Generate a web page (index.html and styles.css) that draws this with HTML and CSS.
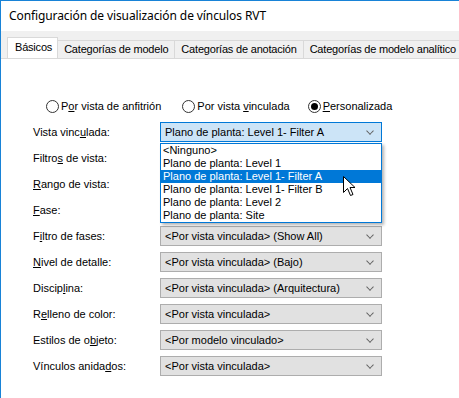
FILE: index.html
```html
<!DOCTYPE html>
<html lang="es">
<head>
   <meta charset="UTF-8">
   <title>Configuración de visualización de vínculos RVT</title>
   <link rel="stylesheet" href="styles.css">
</head>
<body>
   <div class="window">
       <div class="titlebar">Configuración de visualización de vínculos RVT</div>

       <div class="tabbar">
           <div class="tab active">Básicos</div>
           <div class="tab">Categorías de modelo</div>
           <div class="tab">Categorías de anotación</div>
           <div class="tab">Categorías de modelo analítico</div>
       </div>

       <div class="panel">
           <div class="radios">
               <label class="radio"><span class="circle"></span><span>P<u>o</u>r vista de anfitrión</span></label>
               <label class="radio"><span class="circle"></span><span>Por vista <u>v</u>inculada</span></label>
               <label class="radio"><span class="circle checked"></span><span><u>P</u>ersonalizada</span></label>
           </div>

           <div class="form">
               <div class="form-label">Vista vinc<u>u</u>lada:</div>
               <div class="combo-wrap">
                   <div class="combo open">Plano de planta: Level 1- Filter A<span class="chevron"></span></div>
                   <div class="dropdown">
                       <div class="option">&lt;Ninguno&gt;</div>
                       <div class="option">Plano de planta: Level 1</div>
                       <div class="option selected">Plano de planta: Level 1- Filter A</div>
                       <div class="option">Plano de planta: Level 1- Filter B</div>
                       <div class="option">Plano de planta: Level 2</div>
                       <div class="option">Plano de planta: Site</div>
                       <svg class="cursor" width="14" height="22" viewBox="0 0 14 22">
                           <path d="M1.5 1.5 L1.5 17.5 L5.5 13.5 L8.5 20.5 L11 19.5 L8 12.5 L13 12.5 Z" fill="#fff" stroke="#000" stroke-width="1"/>
                       </svg>
                   </div>
               </div>

               <!-- estos tres quedan tapados por la lista abierta -->
               <div class="form-label">Filtro<u>s</u> de vista:</div>
               <div class="combo"></div>

               <div class="form-label"><u>R</u>ango de vista:</div>
               <div class="combo"></div>

               <div class="form-label"><u>F</u>ase:</div>
               <div class="combo"></div>

               <div class="form-label">F<u>i</u>ltro de fases:</div>
               <div class="combo">&lt;Por vista vinculada&gt; (Show All)<span class="chevron"></span></div>

               <div class="form-label"><u>N</u>ivel de detalle:</div>
               <div class="combo">&lt;Por vista vinculada&gt; (Bajo)<span class="chevron"></span></div>

               <div class="form-label">Discip<u>l</u>ina:</div>
               <div class="combo">&lt;Por vista vinculada&gt; (Arquitectura)<span class="chevron"></span></div>

               <div class="form-label">R<u>e</u>lleno de color:</div>
               <div class="combo">&lt;Por vista vinculada&gt;<span class="chevron"></span></div>

               <div class="form-label">Estilos de o<u>b</u>jeto:</div>
               <div class="combo">&lt;Por modelo vinculado&gt;<span class="chevron"></span></div>

               <div class="form-label">Vínculos anida<u>d</u>os:</div>
               <div class="combo">&lt;Por vista vinculada&gt;<span class="chevron"></span></div>
           </div>
       </div>
   </div>
</body>
</html>
```

FILE: styles.css
```css
:root {
    --win-blue: #1883d7;
    --face: #f0f0f0;
    --tab-border: #d9d9d9;
    --combo-bg: #e1e1e1;
    --combo-border: #adadad;
    --accent: #0078d7;
    --hover-bg: #cce4f7;
    --text: #000000;
}

* {
    margin: 0;
    padding: 0;
    box-sizing: border-box;
}

body {
    width: 459px;
    height: 398px;
    overflow: hidden;
    background: #ffffff;
    font-family: 'Liberation Sans', Arial, sans-serif;
    font-size: 11px;
    color: var(--text);
}

.window {
    height: 100%;
    border-top: 1px solid var(--win-blue);
    border-left: 1px solid var(--win-blue);
}

.titlebar {
    height: 30px;
    line-height: 30px;
    padding-left: 8px;
    font-family: 'Noto Sans', sans-serif;
    font-size: 12px;
    letter-spacing: -0.1px;
    background: #ffffff;
}

/* pestañas */
.tabbar {
    height: 27px;
    display: flex;
    align-items: flex-end;
    padding-left: 6px;
    background: var(--face);
    overflow: hidden;
}

.tab {
    height: 18px;
    line-height: 17px;
    padding: 0 6px;
    border: 1px solid var(--tab-border);
    border-bottom: none;
    margin-left: -1px;
    font-size: 11px;
    letter-spacing: -0.2px;
    background: var(--face);
    white-space: nowrap;
}

.tab.active {
    position: relative;
    z-index: 1;
    height: 22px;
    margin-bottom: -1px;
    margin-left: 0;
    line-height: 18px;
    padding: 0 5px 0 7px;
    background: #ffffff;
}

.panel {
    border-top: 1px solid var(--tab-border);
    padding: 40px 0 0 32px;
    background: #ffffff;
    height: 340px;
}

/* radios */
.radios {
    display: flex;
    height: 14px;
    padding-left: 13px;
    margin-bottom: 9px;
}

.radio {
    display: flex;
    align-items: center;
    gap: 2px;
    margin-right: 21px;
}

.radio:nth-child(2) {
    margin-right: 18px;
}

.circle {
    width: 13px;
    height: 13px;
    border: 1px solid #333333;
    border-radius: 50%;
    display: flex;
    align-items: center;
    justify-content: center;
    background: #ffffff;
}

.circle.checked::after {
    content: '';
    width: 7px;
    height: 7px;
    border-radius: 50%;
    background: #000000;
}

/* formulario */
.form {
    display: grid;
    grid-template-columns: 127px 222px;
    grid-auto-rows: 20px;
    row-gap: 6px;
}

.form-label {
    line-height: 20px;
    white-space: nowrap;
}

.combo-wrap {
    position: relative;
}

.combo {
    height: 20px;
    display: flex;
    align-items: center;
    padding-left: 4px;
    border: 1px solid var(--combo-border);
    background: var(--combo-bg);
    position: relative;
    white-space: nowrap;
}

.combo.open {
    background: var(--hover-bg);
    border-color: var(--accent);
}

.chevron {
    position: absolute;
    right: 8px;
    top: 5px;
    width: 6px;
    height: 6px;
    border-right: 1px solid #606060;
    border-bottom: 1px solid #606060;
    transform: rotate(45deg) scale(0.9, 0.9);
}

.dropdown {
    position: absolute;
    top: 21px;
    left: 0;
    width: 222px;
    z-index: 5;
    border: 1px solid var(--accent);
    background: #ffffff;
    box-shadow: 2px 2px 3px rgba(0, 0, 0, 0.3);
}

.option {
    height: 13px;
    line-height: 13px;
    padding-left: 2px;
    white-space: nowrap;
}

.option.selected {
    background: var(--accent);
    color: #ffffff;
}

.cursor {
    position: absolute;
    left: 181px;
    top: 31px;
}
```
